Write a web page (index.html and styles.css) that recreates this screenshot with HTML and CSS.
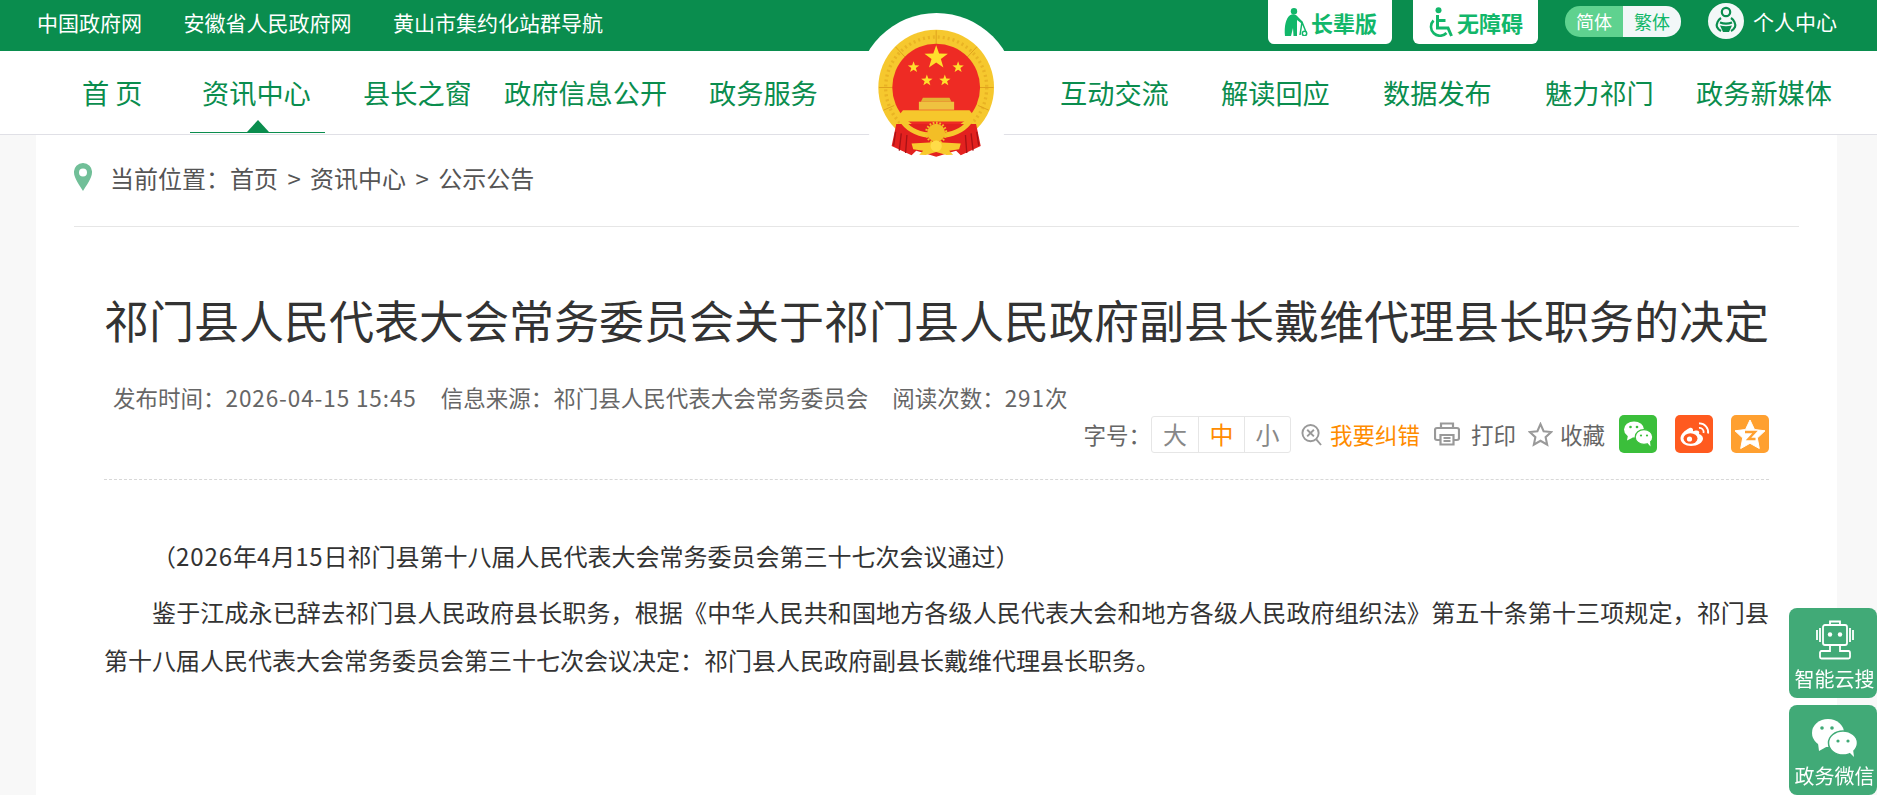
FILE: index.html
```html
<!DOCTYPE html>
<html lang="zh-CN">
<head>
  <meta charset="UTF-8" />
  <title>祁门县人民代表大会常务委员会关于祁门县人民政府副县长戴维代理县长职务的决定</title>
  <link rel="stylesheet" href="styles.css">
</head>
<body>

  <!-- 顶部绿条 -->
  <div class="topbar">
    <div class="top-links">
      <a>中国政府网</a>
      <a>安徽省人民政府网</a>
      <a>黄山市集约化站群导航</a>
    </div>
    <div class="top-tools">
      <a class="mode-btn">
        <svg class="mode-icon icon-elder" viewBox="0 0 25 28"><circle cx="11" cy="3.200" r="3.200"/><path d="M7 7.200c3-1.800 6-1 8 1.800l5 5-1.400 1.600-4.600-3.600V28h-3.500l-.5-8L8 28H2C1 18 3 10 7 7.200z"/><path d="M19 14l-2 13M19 14l4 10" fill="none" stroke="#12b76a" stroke-width="1.500"/><circle cx="21.500" cy="25.500" r="2.200" fill="none" stroke="#12b76a" stroke-width="1.500"/></svg>
        长辈版
      </a>
      <a class="mode-btn">
        <svg class="mode-icon icon-chair" viewBox="0 0 26 30"><circle cx="10.500" cy="3.200" r="3"/><path d="M9.500 8v13h10.500l3.500 8M9.500 13.500h8" fill="none" stroke="#12b76a" stroke-width="3"/><path d="M5.500 13.500a9 9 0 1 0 13 12.500" fill="none" stroke="#12b76a" stroke-width="2.600"/></svg>
        无障碍
      </a>
      <div class="lang-switch">
        <span class="lang-on">简体</span>
        <span class="lang-off">繁体</span>
      </div>
      <a class="user-link">
        <svg class="user-icon" viewBox="0 0 36 36"><circle cx="18" cy="18" r="18" fill="#f3f8f8"/><circle cx="18" cy="9" r="4.200" fill="none" stroke="#0a8d4e" stroke-width="2.200"/><path d="M13 15c-3 2-5 6-4 9 1 2 2 3 4 4M23 15c3 2 5 6 4 9-1 2-2 3-4 4M12 19.500c4 1.500 8 1.500 12 0" fill="none" stroke="#0a8d4e" stroke-width="2.200"/><path d="M12 22.500c4 1 8 1 12 0l-3 6.500h-6z" fill="#0a8d4e"/></svg>
        个人中心
      </a>
    </div>
  </div>

  <!-- 主导航 -->
  <div class="nav">
    <div class="nav-group nav-left">
      <a>首 页</a>
      <a class="active">资讯中心</a>
      <a>县长之窗</a>
      <a>政府信息公开</a>
      <a>政务服务</a>
    </div>
    <div class="nav-group nav-right">
      <a>互动交流</a>
      <a>解读回应</a>
      <a>数据发布</a>
      <a>魅力祁门</a>
      <a>政务新媒体</a>
    </div>
  </div>

  <!-- 国徽 -->
  <div class="emblem-bg"></div>
  <svg class="emblem" viewBox="100 80 400 400">
    <defs>
      <polygon id="star" points="0,-10 2.350,-3.240 9.510,-3.090 3.800,1.240 5.880,8.090 0,4 -5.880,8.090 -3.800,1.240 -9.510,-3.090 -2.350,-3.240"/>
    </defs>
    <circle cx="290" cy="262" r="174" fill="#f6c82e"/>
    <circle cx="290" cy="262" r="152" fill="none" stroke="#e9b324" stroke-width="10" stroke-dasharray="6 9"/>
    <path d="M290 90v42M118 262h40M462 262h-40M168 140l28 30M412 140l-28 30M132 330l32-14M448 330l-32-14" stroke="#dfa21d" stroke-width="3"/>
    <circle cx="290" cy="262" r="132" fill="#ee2b24"/>
    <g fill="#ffdf2c">
      <use href="#star" transform="translate(290 172) scale(3.700)"/>
      <use href="#star" transform="translate(222 201) scale(1.800)"/>
      <use href="#star" transform="translate(356 201) scale(1.800)"/>
      <use href="#star" transform="translate(262 241) scale(1.800)"/>
      <use href="#star" transform="translate(316 241) scale(1.800)"/>
    </g>
    <!-- 红绸 -->
    <path d="M170 372h240l14 66-60 28-14-14-60 18-60-18-14 14-60-28z" fill="#e3211f"/>
    <path d="M168 395l-6 42M185 400l-6 52M202 405l-4 54M412 395l6 42M395 400l6 52M378 405l4 54" stroke="#a81216" stroke-width="4"/>
    <!-- 天安门 -->
    <path d="M250 293h80l6 12h-92z" fill="#e4b233"/>
    <path d="M238 305h106v24H238z" fill="#efc240"/>
    <path d="M178 346l12-16h200l13 16-13 18H190z" fill="#f6c72c"/>
    <path d="M184 356q24 42 84 50M396 356q-24 42-84 50" fill="none" stroke="#f6c72c" stroke-width="15"/>
    <!-- 齿轮和绶带 -->
    <circle cx="290" cy="398" r="27" fill="#f3be26"/>
    <circle cx="290" cy="398" r="30" fill="none" stroke="#f3be26" stroke-width="7" stroke-dasharray="5 5"/>
    <path d="M216 430l54-3 20-6 20 6 54 3-5 18-30 4 12 12-20 1-31-9-31 9-20-1 12-12-30-4z" fill="#f8ca2d"/>
    <circle cx="290" cy="438" r="17" fill="#ffdc48"/>
  </svg>

  <div class="page">
    <div class="crumbs">
      <svg class="pin" viewBox="0 0 18 28"><path d="M9 0a9 9 0 0 1 9 9.500C18 15 12 23 9 28 6 23 0 15 0 9.500A9 9 0 0 1 9 0zm0 5.500a4 4 0 1 0 0 8 4 4 0 0 0 0-8z" fill="#71bf98" fill-rule="evenodd"/></svg>
      <span>当前位置：首页 &gt; 资讯中心 &gt; 公示公告</span>
    </div>

    <div class="article">
      <h1 class="title">祁门县人民代表大会常务委员会关于祁门县人民政府副县长戴维代理县长职务的决定</h1>
      <div class="meta">
        <span>发布时间：<span class="num">2026-04-15 15:45</span></span>
        <span>信息来源：祁门县人民代表大会常务委员会</span>
        <span>阅读次数：<span class="num">291</span>次</span>
      </div>
      <div class="tools">
        <span class="font-label">字号：</span>
        <div class="font-size">
          <span>大</span>
          <span class="on">中</span>
          <span>小</span>
        </div>
        <a class="tool tool-error">
          <svg class="tool-icon icon-error" viewBox="0 0 22 24"><circle cx="10" cy="10.500" r="8.500"/><path d="M6.500 7l7 7M13.500 7l-7 7M16 17l5 6"/></svg>
          我要纠错
        </a>
        <a class="tool tool-print">
          <svg class="tool-icon icon-print" viewBox="0 0 26 24"><path d="M7 6V1.500h12V6M6 18H3c-1 0-2-1-2-2V8c0-1 1-2 2-2h20c1 0 2 1 2 2v8c0 1-1 2-2 2h-3"/><path d="M6.500 13h13v9.500h-13zM9.500 16h7M9.500 19h7"/></svg>
          打印
        </a>
        <a class="tool tool-fav">
          <svg class="tool-icon icon-star" viewBox="0 0 24 24"><path d="M12 2l3 6.800 7.300.8-5.400 4.900 1.500 7.200L12 18l-6.400 3.700 1.500-7.200L1.700 9.600 9 8.800z"/></svg>
          收藏
        </a>
        <a class="share share-wx">
          <svg viewBox="0 0 38 38"><ellipse cx="15" cy="14.500" rx="10" ry="8" fill="#fff"/><path d="M9 20l-1 5.500 6-3z" fill="#fff"/><ellipse cx="25" cy="22" rx="8.800" ry="7.400" fill="#fff" stroke="#3bbf3b" stroke-width="1.200"/><path d="M28 27.500l3.500 4-.5-5.500z" fill="#fff"/><g fill="#3bbf3b"><circle cx="11.500" cy="12" r="1.300"/><circle cx="18" cy="12" r="1.300"/><circle cx="22" cy="20.500" r="1.100"/><circle cx="28" cy="20.500" r="1.100"/></g></svg>
        </a>
        <a class="share share-wb">
          <svg viewBox="0 0 38 38"><path d="M14.500 13c-5 2.500-9 6.500-9 10.500 0 4.500 5 7.500 10.500 7.500 6.500 0 12-3.500 12-7.500 0-2.500-2.500-4-4-4.500 1-2.500-.5-4-3.500-3.500l-2.500.8c.5-2.800-1-4-3.500-3.300z" fill="#fff"/><ellipse cx="15.500" cy="23.500" rx="7" ry="5.200" fill="#ff5a1f"/><circle cx="14.500" cy="24" r="2.600" fill="#fff"/><path d="M24 13a4 4 0 0 1 4.500 5M24 8.500a8.500 8.500 0 0 1 9 10" fill="none" stroke="#fff" stroke-width="1.800"/></svg>
        </a>
        <a class="share share-qz">
          <svg viewBox="0 0 38 38"><path d="M19 5l4.500 9.500 10.500 1.300-7.700 7.200 2 10.500L19 28.300 9.700 33.500l2-10.500L4 15.800l10.500-1.300z" fill="#fff" stroke="#fff" stroke-linejoin="round"/><path d="M14 17h10l-6.500 7h7" fill="none" stroke="#ffa030" stroke-width="2.400"/></svg>
        </a>
      </div>

      <div class="content">
        <p>（<span class="num">2026</span>年<span class="num">4</span>月<span class="num">15</span>日祁门县第十八届人民代表大会常务委员会第三十七次会议通过）</p>
        <p>鉴于江成永已辞去祁门县人民政府县长职务，根据《中华人民共和国地方各级人民代表大会和地方各级人民政府组织法》第五十条第十三项规定，祁门县第十八届人民代表大会常务委员会第三十七次会议决定：祁门县人民政府副县长戴维代理县长职务。</p>
      </div>
    </div>
  </div>

  <!-- 右侧浮动 -->
  <div class="side">
    <a class="side-btn">
      <svg viewBox="0 0 44 44" fill="none" stroke="#fff" stroke-width="1.800"><path d="M17 7V3.500h10V7"/><rect x="10" y="7" width="24" height="20" rx="2"/><circle cx="17" cy="16.500" r="2.200" fill="#fff" stroke="none"/><circle cx="27" cy="16.500" r="2.200" fill="#fff" stroke="none"/><path d="M7 10v14M4 12v10M37 10v14M40 12v10"/><path d="M17 27v6H8.500c-1 0-1.500 1-1.500 2v4c0 1 .5 1.500 1.500 1.500h27c1 0 1.500-.5 1.500-1.500v-4c0-1-.5-2-1.500-2H27v-6"/></svg>
      <span>智能云搜</span>
    </a>
    <a class="side-btn">
      <svg viewBox="0 -3 48 44"><ellipse cx="17" cy="15" rx="16" ry="14" fill="#fff"/><path d="M7 25l1 8 9-5z" fill="#fff"/><ellipse cx="32" cy="25" rx="14.500" ry="12" fill="#fff" stroke="#41aa77" stroke-width="1.500"/><path d="M38 34l5 5-1-8z" fill="#fff"/><g fill="#41aa77"><circle cx="11" cy="10" r="1.800"/><circle cx="21" cy="10" r="1.800"/><circle cx="27" cy="23" r="1.600"/><circle cx="37" cy="23" r="1.600"/></g></svg>
      <span>政务微信</span>
    </a>
  </div>

</body>
</html>
```

FILE: styles.css
```css
/* 基础样式 */
* {
  box-sizing: border-box;
}

html,
body {
  height: 100%;
}

body {
  margin: 0;
  background-color: #f8f8f8;
  font-family: "Noto Sans CJK SC", "Liberation Sans", sans-serif;
  color: #333;
  overflow: hidden;
}

a {
  color: inherit;
  text-decoration: none;
}

/* 数字比默认字体略宽 */
.num {
  letter-spacing: 0.9px;
}

/* Topbar */
.topbar {
  display: flex;
  justify-content: space-between;
  height: 51px;
  padding: 0 40px 0 37px;
  background: #0a8d4e;
  color: #fff;
  font-size: 21px;
}

.top-links {
  display: flex;
  align-items: center;
  gap: 41.500px;
  height: 44px;
}

.top-tools {
  display: flex;
  align-items: flex-start;
}

.mode-btn {
  display: flex;
  align-items: center;
  gap: 3px;
  height: 44px;
  margin-right: 21px;
  padding: 0 15px;
  background: #fff;
  border-radius: 0 0 6px 6px;
  color: #12b76a;
  font-size: 22px;
  font-weight: 700;
}

.mode-icon {
  fill: #12b76a;
}

.icon-elder {
  width: 25px;
  height: 28px;
}

.icon-chair {
  width: 26px;
  height: 30px;
}

.lang-switch {
  display: flex;
  height: 31px;
  margin: 6px 27px 0 6px;
  border-radius: 15px;
  overflow: hidden;
  font-size: 18px;
  line-height: 30px;
}

.lang-switch span {
  width: 58px;
  text-align: center;
}

.lang-on {
  background: #5fd28f;
}

.lang-off {
  background: #f2f7f8;
  color: #12b76a;
}

.user-link {
  display: flex;
  align-items: center;
  gap: 9px;
  height: 42px;
}

.user-icon {
  width: 36px;
  height: 36px;
}

/* Nav */
.nav {
  display: flex;
  justify-content: space-between;
  height: 84px;
  padding: 0 45px 0 82px;
  background: #fff;
  border-bottom: 1px solid #e0e0e6;
  color: #0a8d4e;
  font-size: 27.200px;
  line-height: 83px;
}

.nav-group {
  display: grid;
}

.nav-left {
  grid-template-columns: 120px 161px 141px 205px auto;
}

.nav-right {
  grid-template-columns: 161px 162px 162px 151px auto;
}

.nav a {
  position: relative;
  height: 83px;
  white-space: nowrap;
}

.nav .active::before {
  content: "";
  position: absolute;
  left: -12px;
  top: 81px;
  width: 135px;
  height: 1px;
  background: #0a8d4e;
}

.nav .active::after {
  content: "";
  position: absolute;
  left: 45px;
  top: 69px;
  border-left: 11px solid transparent;
  border-right: 11px solid transparent;
  border-bottom: 12px solid #0a8d4e;
}

/* 国徽 */
.emblem-bg {
  position: absolute;
  left: 857px;
  top: 13px;
  width: 159px;
  height: 159px;
  background: #fff;
  border-radius: 50%;
}

.emblem {
  position: absolute;
  left: 873px;
  top: 27px;
  width: 133px;
  height: 133px;
}

/* Page */
.page {
  height: 660px;
  margin: 0 40px 0 36px;
  padding: 0 38px;
  background: #fff;
}

.crumbs {
  display: flex;
  align-items: center;
  gap: 18px;
  height: 92px;
  border-bottom: 1px solid #e6e6e6;
  padding-bottom: 7px;
  font-size: 24px;
  word-spacing: 4px;
  color: #555;
}

.pin {
  width: 18px;
  height: 28px;
}

.article {
  padding: 0 30px;
}

.title {
  margin: 0;
  padding-top: 61px;
  font-size: 45px;
  font-weight: 400;
  line-height: 64px;
  white-space: nowrap;
  color: #333;
}

.meta {
  display: flex;
  gap: 24px;
  margin-top: 30px;
  padding-left: 9px;
  font-size: 22.500px;
  line-height: 30px;
  color: #666;
}

.tools {
  display: flex;
  justify-content: flex-end;
  align-items: center;
  height: 38px;
  margin-top: 3px;
  font-size: 22.500px;
  color: #666;
}

.font-size {
  display: flex;
  height: 37px;
  margin-right: 10px;
  border: 1px solid #e6e6e6;
  border-radius: 3px;
  font-size: 24px;
  line-height: 34px;
  color: #888;
}

.font-size span {
  width: 46px;
  text-align: center;
  border-left: 1px solid #e6e6e6;
}

.font-size span:first-child {
  border-left: none;
}

.font-size .on {
  color: #ff8c00;
}

.tool {
  display: flex;
  align-items: center;
}

.tool-icon {
  fill: none;
  stroke: #999;
  stroke-width: 2;
}

.tool-error {
  gap: 8px;
  margin-right: 14px;
  color: #ff8c00;
}

.icon-error {
  width: 21px;
  height: 23px;
}

.tool-print {
  gap: 11px;
  margin-right: 12px;
}

.icon-print {
  width: 26px;
  height: 24px;
  stroke-width: 2.200;
}

.tool-fav {
  gap: 7px;
  margin-right: 14px;
}

.icon-star {
  width: 25px;
  height: 25px;
}

.share {
  width: 38px;
  height: 38px;
  margin-right: 18px;
  border-radius: 5px;
}

.share:last-child {
  margin-right: 0;
}

.share svg {
  display: block;
  width: 38px;
  height: 38px;
}

.share-wx {
  background: #3bbf3b;
}

.share-wb {
  background: #ff5a1f;
}

.share-qz {
  background: #ffa030;
}

/* 正文 */
.content {
  margin-top: 26px;
  padding-top: 52px;
  border-top: 1px dashed #d8d8d8;
  font-size: 24px;
  line-height: 48px;
  color: #333;
}

.content p {
  margin: 0 0 8px;
  text-indent: 2em;
  text-align: justify;
}

/* 右侧浮动按钮 */
.side {
  position: fixed;
  right: 0;
  bottom: 0;
  display: flex;
  flex-direction: column;
  gap: 7px;
  width: 88px;
}

.side-btn {
  display: flex;
  flex-direction: column;
  align-items: center;
  height: 90px;
  padding: 10px 0 0 3px;
  background: #41aa77;
  border-radius: 8px;
  color: #fff;
  font-size: 20px;
  line-height: 30px;
  white-space: nowrap;
}

.side-btn svg {
  width: 48px;
  height: 44px;
  margin-bottom: 2px;
}
```
